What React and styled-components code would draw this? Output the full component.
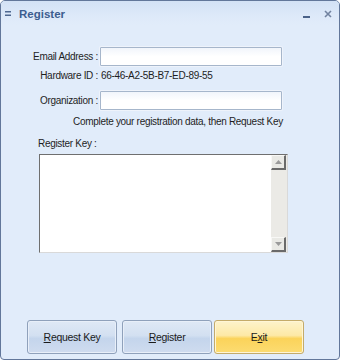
import React from "react";
import styled, { createGlobalStyle } from "styled-components";

const Global = createGlobalStyle`
  html, body { margin: 0; padding: 0; background: #ffffff; }
  * { box-sizing: border-box; }
`;

const Window = styled.div`
  width: 340px;
  height: 360px;
  border: 1px solid #62779a;
  border-radius: 5px 5px 4px 4px;
  background: #e1ecfa;
  display: flex;
  flex-direction: column;
  overflow: hidden;
  font-family: "Liberation Sans", Arial, sans-serif;
  font-size: 10px;
  letter-spacing: -0.3px;
  color: #1e1e1e;
`;

const TitleBar = styled.div`
  height: 24px;
  flex: none;
  display: flex;
  align-items: center;
  padding: 2px 0 0 4px;
  background: linear-gradient(#d3e2f5, #dde9f9 60%, #e1ecfa);
`;

const Title = styled.div`
  margin-left: 8px;
  font-size: 11.5px;
  letter-spacing: 0;
  font-weight: bold;
  color: #3d5d8f;
  flex: 1;
`;

const TitleButton = styled.div`
  width: 22px;
  height: 18px;
  display: flex;
  align-items: center;
  justify-content: center;
`;

const Body = styled.div`
  flex: 1;
  display: flex;
  flex-direction: column;
  padding: 0 0 5px 0;
`;

const Row = styled.div`
  display: flex;
  align-items: center;
  height: ${(p) => p.$h}px;
  margin-top: ${(p) => p.$mt || 0}px;
  padding-left: ${(p) => p.$pl || 0}px;
  white-space: nowrap;
`;

const Label = styled.div`
  width: 99px;
  text-align: right;
  padding-right: 2px;
  flex: none;
  white-space: nowrap;
`;

const Value = styled.div`
  padding-left: 1px;
  white-space: nowrap;
`;

const Input = styled.div`
  width: 182px;
  height: 19px;
  border: 1px solid #a6b6cb;
  border-radius: 1px;
  background: linear-gradient(#f1f5fb, #ffffff 50%);
  box-shadow: 0 0 0 1px #eef3fb;
`;

const KeyBox = styled.div`
  margin: 2px 0 0 38px;
  width: 249px;
  height: 99px;
  display: flex;
  border-top: 1px solid #6f6f6f;
  border-left: 1px solid #6f6f6f;
  border-bottom: 1px solid #d9d9d9;
  border-right: 1px solid #d9d9d9;
  background: #ffffff;
`;

const KeyArea = styled.div`
  flex: 1;
`;

const ScrollBar = styled.div`
  width: 16px;
  display: flex;
  flex-direction: column;
  background: #ebeae6;
  padding: 0 1px 0 0;
`;

const Track = styled.div`
  flex: 1;
`;

const ArrowButton = styled.div`
  height: 15px;
  background: #e9e9e5;
  border-top: 1px solid #f8f8f6;
  border-left: 1px solid #f8f8f6;
  border-right: 2px solid #6a6a6a;
  border-bottom: 2px solid #6a6a6a;
  display: flex;
  align-items: center;
  justify-content: center;
`;

const ButtonRow = styled.div`
  margin-top: auto;
  display: flex;
  padding-left: 26px;
`;

const Button = styled.div`
  width: 90px;
  height: 34px;
  margin-left: ${(p) => p.$ml || 0}px;
  border: 1px solid ${(p) => (p.$active ? "#c4ab6a" : "#8fa1bb")};
  border-radius: 3px;
  display: flex;
  align-items: center;
  justify-content: center;
  color: #1b1b1b;
  font-size: 10.5px;
  background: ${(p) =>
    p.$active
      ? "linear-gradient(#fdf3cc, #fde9a6 45%, #fbd35a 55%, #fcdc72)"
      : "linear-gradient(#dfe9f6, #d3e0f1 45%, #c4d5ec 55%, #cfdcef)"};
  box-shadow: inset 0 0 0 1px ${(p) => (p.$active ? "#fff6d6" : "#e8eff9")};
  u { text-decoration: underline; }
`;

const ArrowUp = () => (
  <svg width="7" height="4" viewBox="0 0 7 4">
    <path d="M0 4 L3.5 0 L7 4 Z" fill="#9a9a9a" />
  </svg>
);
const ArrowDown = () => (
  <svg width="7" height="4" viewBox="0 0 7 4">
    <path d="M0 0 L3.5 4 L7 0 Z" fill="#9a9a9a" />
  </svg>
);

export default function App() {
  return (
    <>
      <Global />
      <Window>
        <TitleBar>
          <svg width="6" height="6" viewBox="0 0 6 6">
            <rect x="0" y="0" width="6" height="1.5" fill="#4f6890" />
            <rect x="0" y="3.5" width="6" height="1.5" fill="#4f6890" />
          </svg>
          <Title>Register</Title>
          <TitleButton>
            <svg width="7" height="10" viewBox="0 0 7 10">
              <rect x="0" y="7" width="7" height="2" fill="#4a6289" />
            </svg>
          </TitleButton>
          <TitleButton>
            <svg width="8" height="8" viewBox="0 0 8 8">
              <path d="M1 1 L7 7 M7 1 L1 7" stroke="#7283a0" strokeWidth="1.6" />
            </svg>
          </TitleButton>
        </TitleBar>
        <Body>
          <Row $h={20} $mt={21}>
            <Label>Email Address :</Label>
            <Input />
          </Row>
          <Row $h={18}>
            <Label>Hardware ID :</Label>
            <Value>66-46-A2-5B-B7-ED-89-55</Value>
          </Row>
          <Row $h={20} $mt={6}>
            <Label>Organization :</Label>
            <Input />
          </Row>
          <Row $h={18} $mt={2} $pl={72}>
            Complete your registration data, then Request Key
          </Row>
          <Row $h={18} $mt={4} $pl={37}>
            Register Key :
          </Row>
          <KeyBox>
            <KeyArea />
            <ScrollBar>
              <ArrowButton>
                <ArrowUp />
              </ArrowButton>
              <Track />
              <ArrowButton>
                <ArrowDown />
              </ArrowButton>
            </ScrollBar>
          </KeyBox>
          <ButtonRow>
            <Button>
              <span>
                <u>R</u>equest Key
              </span>
            </Button>
            <Button $ml={5}>
              <span>
                <u>R</u>egister
              </span>
            </Button>
            <Button $ml={2} $active>
              <span>
                E<u>x</u>it
              </span>
            </Button>
          </ButtonRow>
        </Body>
      </Window>
    </>
  );
}
